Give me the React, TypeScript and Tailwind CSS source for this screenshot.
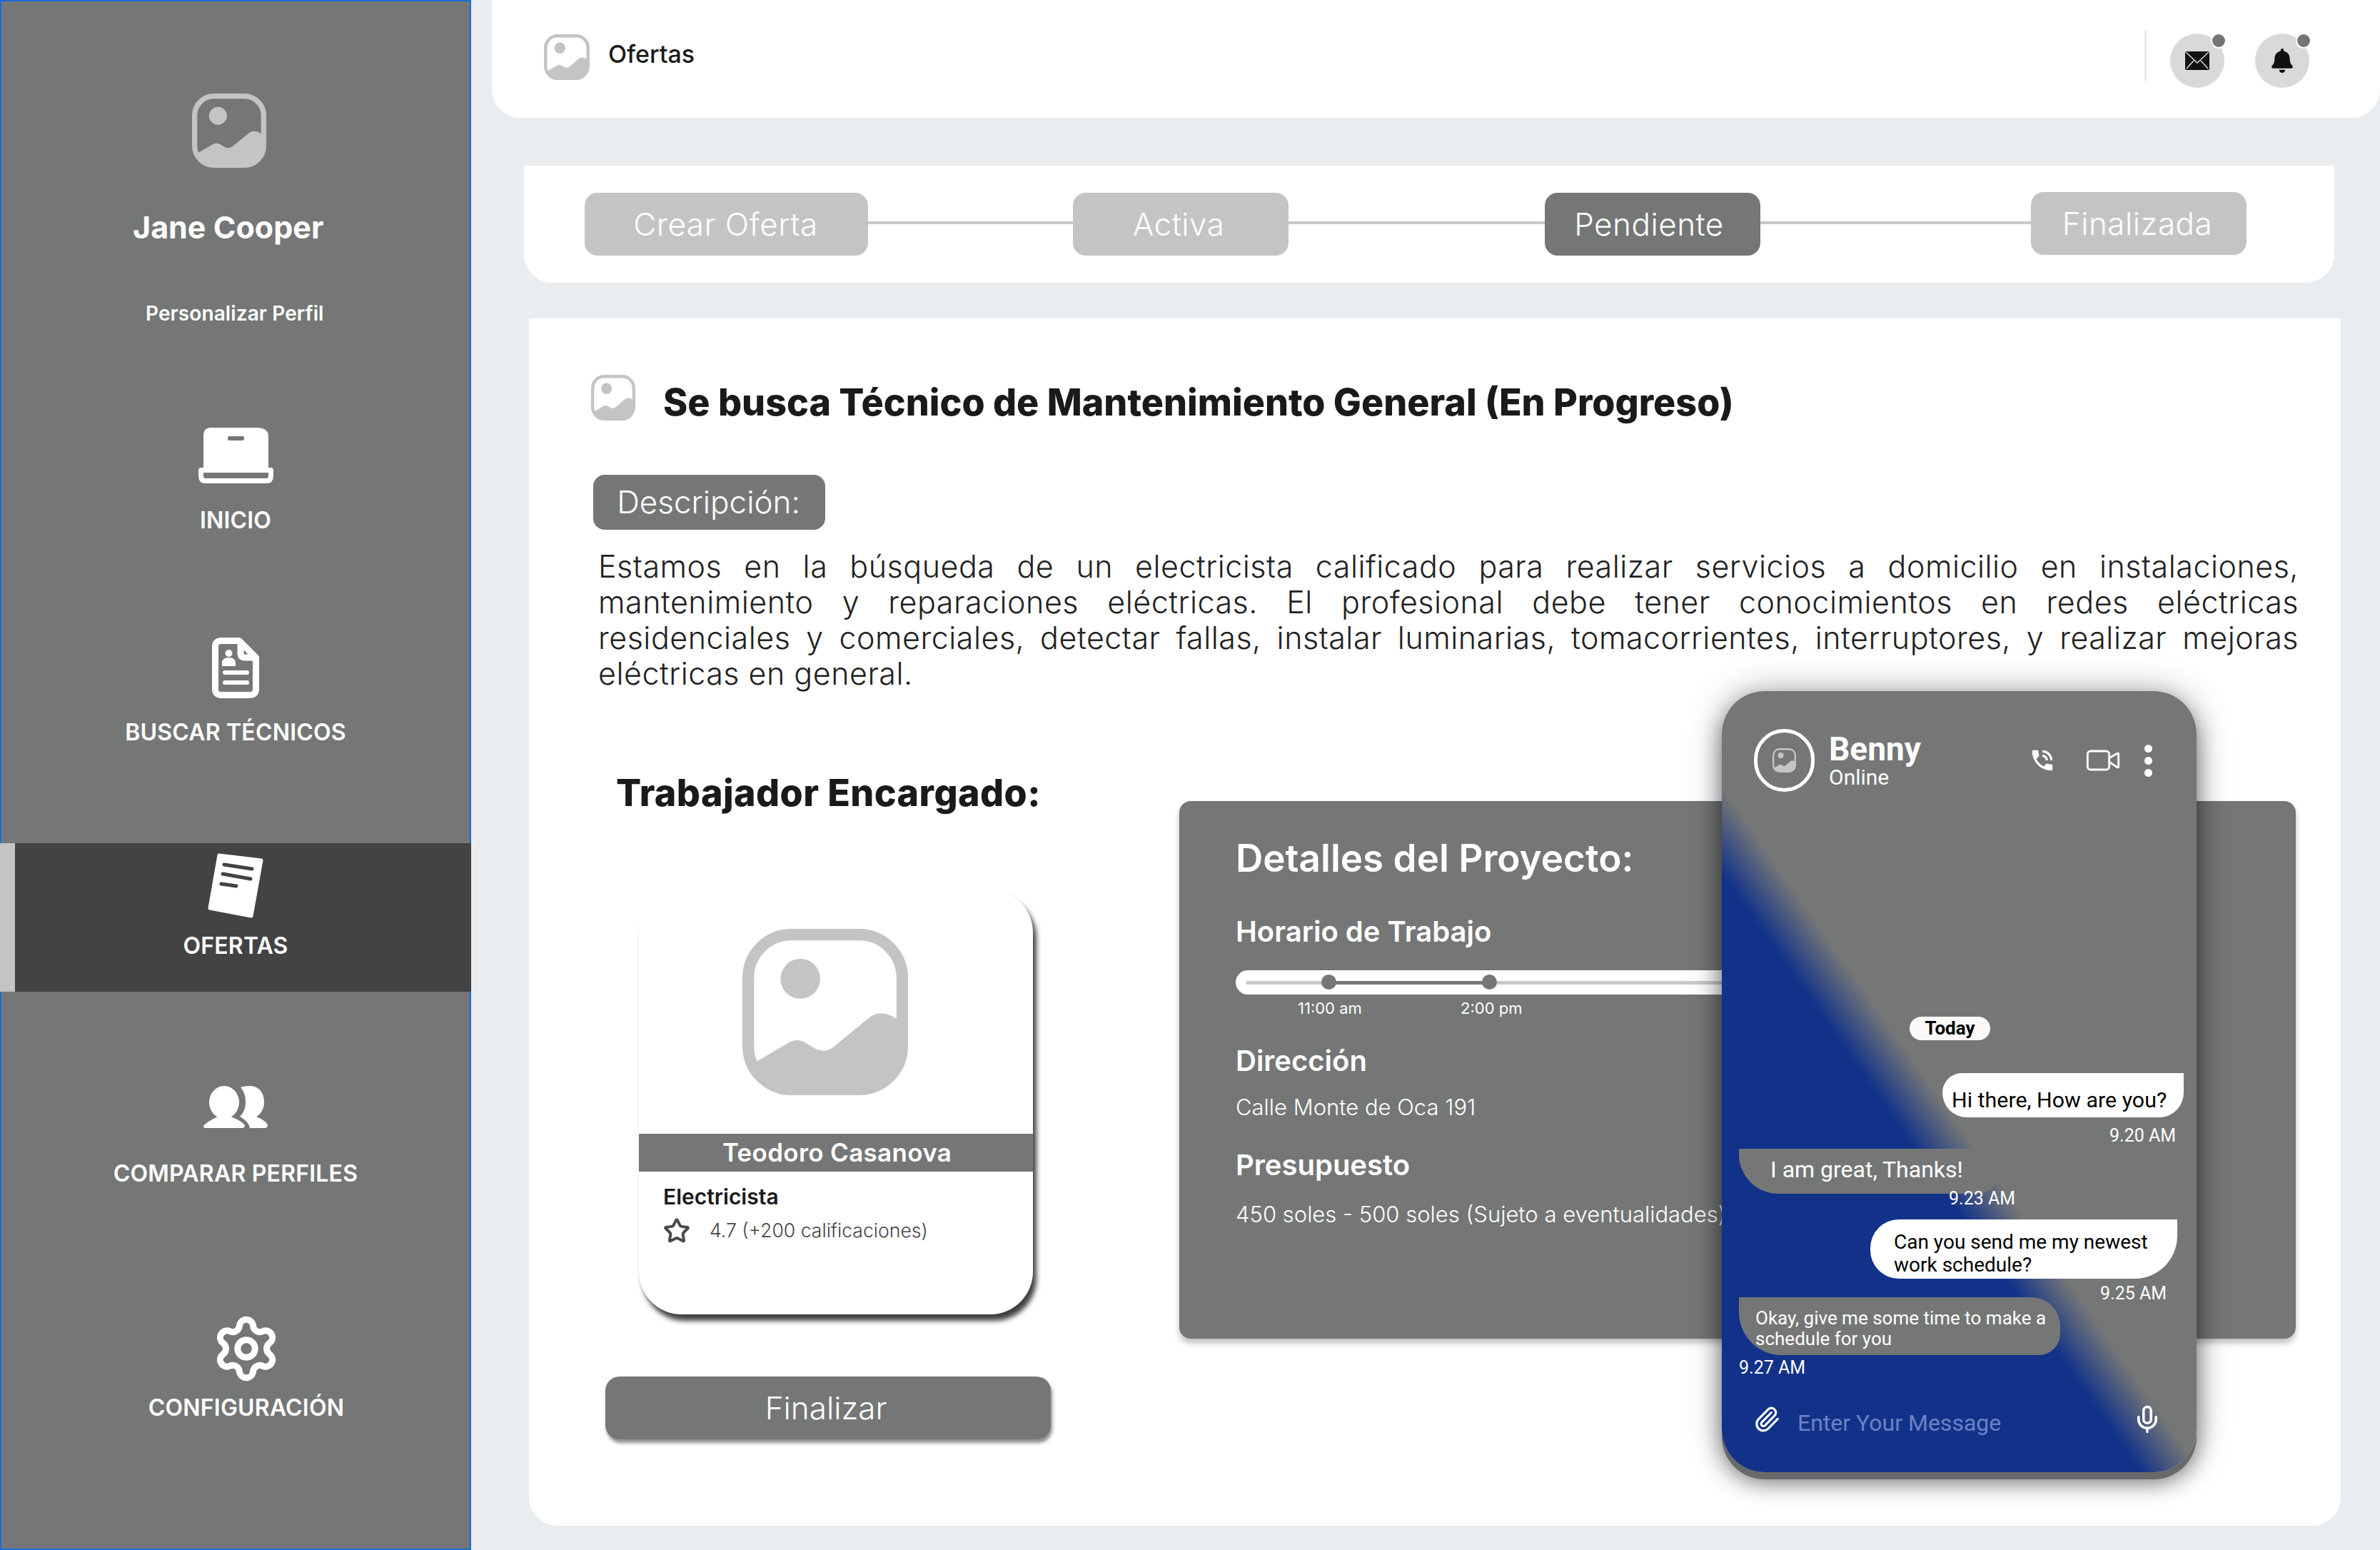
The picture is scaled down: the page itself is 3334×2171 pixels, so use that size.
import { Mic, Paperclip, Settings, Star, Video } from "lucide-react"
import { FaBell } from "react-icons/fa"
import { MdPhoneInTalk } from "react-icons/md"

function ImageIcon({ className }: { className?: string }) {
  return (
    <svg viewBox="0 0 100 100" preserveAspectRatio="none" className={className} fill="currentColor">
      <rect x="3.5" y="3.5" width="93" height="93" rx="26" fill="none" stroke="currentColor" strokeWidth="7" />
      <circle cx="35" cy="30" r="12" />
      <path d="M8 80 L27 69 Q33 65 39 69 L44 72 Q50 75 55 71 L77 53 Q84 48 93 54 L97 55 V72 Q97 97 72 97 H28 Q3 97 3 72 V78 Z" />
    </svg>
  )
}

function LaptopIcon() {
  return (
    <svg viewBox="0 0 105 79" className="w-[105px] h-[79px]" fill="white">
      <path
        fillRule="evenodd"
        d="M17 0 H81 Q98 0 98 12 V56 H7 V12 Q7 0 17 0 Z M43 12 Q41 12 41 15 Q41 18 43 18 H62 Q64 18 64 15 Q64 12 62 12 Z"
      />
      <path
        fillRule="evenodd"
        d="M4 56 H101 Q105 56 105 60 V68 Q105 78 95 78 H10 Q0 78 0 68 V60 Q0 56 4 56 Z M7 63 V68 Q7 71 10 71 H95 Q98 71 98 68 V63 Z"
      />
    </svg>
  )
}

function ProfileDocIcon() {
  return (
    <svg viewBox="0 0 66 85" className="w-[66px] h-[85px]" fill="none" stroke="white">
      <path
        strokeWidth="9"
        strokeLinejoin="round"
        d="M13 4.5 H38 L61.5 28 V72 Q61.5 80.5 53 80.5 H13 Q4.5 80.5 4.5 72 V13 Q4.5 4.5 13 4.5 Z"
      />
      <path strokeWidth="9" strokeLinejoin="round" d="M40 6 V22 Q40 28 46 28 H60" />
      <circle cx="23.5" cy="22" r="5" fill="white" stroke="none" />
      <path d="M14 40 V36 Q14 28 23.5 28 Q33 28 33 36 V40 Z" fill="white" stroke="none" />
      <path strokeWidth="6" strokeLinecap="round" d="M18 49 H49 M18 63 H49" />
    </svg>
  )
}

function OfferIcon() {
  return (
    <svg viewBox="0 0 78 92" className="w-[78px] h-[92px]">
      <path d="M16 4 L75 11 L61 89 L3 78 Z" fill="white" stroke="white" strokeWidth="5" strokeLinejoin="round" />
      <path d="M23 17 L62 23 M21 30 L60 37 M19 44 L40 47" stroke="#434343" strokeWidth="5" strokeLinecap="round" />
    </svg>
  )
}

function PeopleIcon() {
  return (
    <svg viewBox="0 0 90 59" className="w-[90px] h-[59px]" fill="white">
      <ellipse cx="29" cy="23" rx="21" ry="23" />
      <path d="M0 56 Q5 50 20 43 H38 Q54 49 58 55 Q58 59 54 59 H3 Q0 59 0 56 Z" />
      <path d="M52 2 Q57 0 65 0 C78 0 85 10 85 23 C85 32 80 40 74 43 Q86 48 90 54 Q90 59 86 59 H65 C64 52 58 47 51 43 C56 38 59 31 59 23 C59 14 57 8 52 2 Z" />
    </svg>
  )
}

function MailIcon() {
  return (
    <svg viewBox="0 0 34 26" className="w-[34px] h-[26px]">
      <rect width="34" height="26" rx="2" fill="#111111" />
      <path d="M1 1 L17 16 L33 1 M2 24 L12 13 M32 24 L22 13" fill="none" stroke="#d9d9d9" strokeWidth="1.5" />
    </svg>
  )
}

function Sidebar() {
  const labelClass = "h-[40px] text-[32px] leading-[40px] font-semibold tracking-[0.2px] whitespace-nowrap"
  return (
    <aside className="w-[660px] h-[2171px] shrink-0 border-2 border-[#1a6bdc] bg-[#757776] flex flex-col text-white">
      <ImageIcon className="ml-[267px] mt-[129px] w-[104px] h-[104px] text-[#c4c4c4]" />
      <div className="mt-[55px] ml-[184px] h-[56px] text-[43px] leading-[56px] font-bold whitespace-nowrap">Jane Cooper</div>
      <div className="mt-[73px] ml-[202px] h-[40px] text-[28px] leading-[40px] font-semibold tracking-[0.1px] whitespace-nowrap">Personalizar Perfil</div>

      <div className="mt-[140px] flex flex-col items-center">
        <LaptopIcon />
        <div className={`mt-[31px] ${labelClass}`}>INICIO</div>
      </div>
      <div className="mt-[144px] flex flex-col items-center">
        <ProfileDocIcon />
        <div className={`mt-[28px] ${labelClass}`}>BUSCAR TÉCNICOS</div>
      </div>
      <div className="mt-[135px] -mx-[2px] h-[208px] pt-[13px] flex flex-col items-center bg-[#434343] border-l-[21px] border-[#c4c4c4] pr-[21px]">
        <OfferIcon />
        <div className={`mt-[19px] ${labelClass}`}>OFERTAS</div>
      </div>
      <div className="mt-[132px] flex flex-col items-center">
        <PeopleIcon />
        <div className={`mt-[44px] ${labelClass}`}>COMPARAR PERFILES</div>
      </div>
      <div className="mt-[181px] pl-[30px] flex flex-col items-center">
        <Settings size={98} strokeWidth={2.2} className="-my-[5px]" />
        <div className={`mt-[19px] ${labelClass}`}>CONFIGURACIÓN</div>
      </div>
    </aside>
  )
}

function TopBar() {
  return (
    <header className="ml-[29px] h-[165px] bg-white rounded-bl-[40px] rounded-br-[40px] flex items-center pl-[73px] pr-[99px]">
      <ImageIcon className="w-[64px] h-[64px] -mt-[6px] text-[#c4c4c4]" />
      <span className="ml-[26px] -mt-[15px] text-[34px] font-medium text-[#1a1a1a]">Ofertas</span>
      <div className="ml-auto w-[3px] h-[70px] -mt-[9px] bg-[#e6e8ea]" />
      <div className="ml-[33px] mt-[5px] relative w-[76px] h-[76px] rounded-full bg-[#d9d9d9] flex items-center justify-center">
        <MailIcon />
        <span className="absolute -top-[1px] -right-[3px] w-[22px] h-[22px] rounded-full bg-[#757776] border-2 border-white" />
      </div>
      <div className="ml-[43px] mt-[5px] relative w-[76px] h-[76px] rounded-full bg-[#d9d9d9] flex items-center justify-center">
        <FaBell className="text-[#111111] text-[34px]" />
        <span className="absolute -top-[1px] -right-[3px] w-[22px] h-[22px] rounded-full bg-[#757776] border-2 border-white" />
      </div>
    </header>
  )
}

function Stepper() {
  const pillClass = "h-[88px] rounded-[18px] flex items-center justify-center text-[44px] font-light tracking-[0.5px] text-white"
  const lineClass = "h-[4px] bg-[#c9c9c9] -mt-[4px]"
  return (
    <section className="ml-[74px] mt-[67px] w-[2536px] h-[164px] bg-white rounded-bl-[40px] rounded-br-[40px] flex items-center pl-[85px]">
      <div className={`w-[397px] pr-[2px] bg-[#c4c4c4] ${pillClass}`}>Crear Oferta</div>
      <div className={`w-[287px] ${lineClass}`} />
      <div className={`w-[302px] pr-[6px] bg-[#c4c4c4] ${pillClass}`}>Activa</div>
      <div className={`w-[359px] ${lineClass}`} />
      <div className={`w-[302px] pr-[10px] bg-[#757776] ${pillClass}`}>Pendiente</div>
      <div className={`w-[379px] ${lineClass}`} />
      <div className={`w-[302px] pr-[4px] -mt-[3px] bg-[#c4c4c4] ${pillClass}`}>Finalizada</div>
    </section>
  )
}

function WorkerColumn() {
  return (
    <div className="ml-[107px] w-[624px] shrink-0 flex flex-col">
      <h2 className="ml-[15px] h-[60px] text-[52px] leading-[60px] font-extrabold tracking-[0.4px] text-[#1a1a1a] whitespace-nowrap">Trabajador Encargado:</h2>
      <div className="mt-[105px] ml-[47px] w-[552px] h-[595px] bg-white rounded-[60px] shadow-[5px_9px_7px_rgba(0,0,0,0.75)] overflow-hidden flex flex-col">
        <ImageIcon className="mt-[55px] ml-[145px] w-[232px] h-[233px] text-[#c4c4c4]" />
        <div className="mt-[54px] h-[53px] pl-[3px] bg-[#757776] flex items-center justify-center text-[35px] font-semibold tracking-[0.3px] text-white">Teodoro Casanova</div>
        <div className="mt-[15px] ml-[34px] text-[30px] leading-[40px] font-semibold text-[#1a1a1a]">Electricista</div>
        <div className="mt-[8px] ml-[34px] flex items-center text-[26.6px] font-light text-[#444444]">
          <Star size={38} strokeWidth={2.5} className="text-[#4a4a4a]" />
          <span className="ml-[27px]">4.7 (+200 calificaciones)</span>
        </div>
      </div>
      <button className="mt-[87px] h-[88px] pr-[6px] rounded-[20px] bg-[#757776] shadow-[2px_5px_5px_rgba(0,0,0,0.45)] text-[44px] font-light text-white">
        Finalizar
      </button>
    </div>
  )
}

function DetailsPanel() {
  const headingClass = "h-[46px] text-[40px] leading-[46px] font-semibold text-white"
  const valueClass = "h-[40px] text-[31px] leading-[40px] font-light text-white whitespace-nowrap"
  return (
    <div className="ml-[180px] mt-[152px] w-[1564px] h-[753px] rounded-[16px] bg-[#757776] shadow-[0_6px_8px_rgba(0,0,0,0.25)] pt-[50px] pl-[79px] flex flex-col">
      <h3 className="h-[60px] text-[53px] leading-[60px] font-semibold text-white">Detalles del Proyecto:</h3>
      <div className={`mt-[50px] ${headingClass}`}>Horario de Trabajo</div>
      <div className="mt-[31px] relative w-[800px] h-[34px] rounded-l-full bg-white">
        <div className="absolute left-[15px] right-0 top-[15px] h-[5px] bg-[#c9c9c9]" />
        <div className="absolute left-[130px] w-[225px] top-[15px] h-[5px] bg-[#757776]" />
        <span className="absolute left-[120px] top-[6px] w-[21px] h-[21px] rounded-full bg-[#757776]" />
        <span className="absolute left-[345px] top-[6px] w-[21px] h-[21px] rounded-full bg-[#757776]" />
      </div>
      <div className="mt-[4px] pl-[87px] flex text-[22px] leading-[30px] text-white">
        <span className="w-[228px]">11:00 am</span>
        <span>2:00 pm</span>
      </div>
      <div className={`mt-[36px] ${headingClass}`}>Dirección</div>
      <div className={`mt-[22px] ${valueClass}`}>Calle Monte de Oca 191</div>
      <div className={`mt-[38px] ${headingClass}`}>Presupuesto</div>
      <div className={`mt-[26px] ${valueClass}`}>450 soles - 500 soles (Sujeto a eventualidades)</div>
    </div>
  )
}

function ChatPhone() {
  const stamp = "text-[25px] leading-[32px] text-white"
  return (
    <div
      className="absolute left-[1671px] top-[522px] w-[665px] h-[1094px] rounded-[60px] bg-[linear-gradient(235deg,#757776_53%,#12328a_59%)] shadow-[0_10px_0_#686a69,0_14px_30px_rgba(0,0,0,0.45),0_0_50px_rgba(0,0,0,0.3)] flex flex-col"
      style={{ fontFamily: "Roboto, sans-serif" }}
    >
      <div className="mt-[53px] ml-[45px] mr-[62px] flex items-center text-white">
        <div className="w-[85px] h-[88px] rounded-full border-[5px] border-white flex items-center justify-center">
          <ImageIcon className="w-[33px] h-[34px] text-[#c4c4c4]" />
        </div>
        <div className="ml-[20px] pt-[2px] flex flex-col">
          <span className="text-[46px] leading-[46px] font-bold">Benny</span>
          <span className="text-[30px] leading-[34px]">Online</span>
        </div>
        <MdPhoneInTalk className="ml-auto text-[38px]" />
        <Video size={52} strokeWidth={1.3} className="ml-[40px]" />
        <div className="ml-[32px] flex flex-col gap-[6px]">
          <span className="w-[11px] h-[11px] rounded-full bg-white" />
          <span className="w-[11px] h-[11px] rounded-full bg-white" />
          <span className="w-[11px] h-[11px] rounded-full bg-white" />
        </div>
      </div>

      <div className="mt-[315px] ml-[263px] w-[113px] h-[33px] rounded-full bg-[#faf9f7] flex items-center justify-center text-[26px] font-bold text-black">
        Today
      </div>

      <div className="mt-[46px] ml-[309px] w-[338px] h-[62px] bg-white rounded-[40px_0_50px_50px] pl-[13px] pt-[20px] text-[30.4px] leading-[36px] text-black whitespace-nowrap">
        Hi there, How are you?
      </div>
      <div className={`mt-[10px] ml-[543px] ${stamp}`}>9.20 AM</div>

      <div className="mt-[2px] ml-[24px] w-[364px] h-[63px] bg-[#757776] rounded-[0_0_30px_55px] pl-[44px] pt-[7px] text-[32px] leading-[44px] text-white whitespace-nowrap">
        I am great, Thanks!
      </div>
      <div className={`-mt-[9px] ml-[318px] ${stamp}`}>9.23 AM</div>

      <div className="mt-[13px] ml-[208px] w-[430px] h-[83px] bg-white rounded-[40px_0_60px_40px] pl-[33px] pt-[16px] text-[28px] leading-[32px] text-black">
        Can you send me my newest
        <br />
        work schedule?
      </div>
      <div className={`mt-[5px] ml-[530px] ${stamp}`}>9.25 AM</div>

      <div className="-mt-[11px] ml-[24px] w-[450px] h-[81px] bg-[#757776] rounded-[0_40px_30px_60px] pl-[23px] pt-[15px] text-[26px] leading-[29px] text-white">
        Okay, give me some time to make a
        <br />
        schedule for you
      </div>
      <div className={`mt-[2px] ml-[24px] ${stamp}`}>9.27 AM</div>

      <div className="mt-[27px] ml-[44px] mr-[48px] flex items-center text-white">
        <Paperclip size={38} strokeWidth={2} />
        <span className="ml-[24px] mt-[10px] text-[32px] text-[#6c82c4]">Enter Your Message</span>
        <Mic size={42} strokeWidth={2} className="ml-auto" />
      </div>
    </div>
  )
}

const descriptionLines = [
  "Estamos en la búsqueda de un electricista calificado para realizar servicios a domicilio en instalaciones,",
  "mantenimiento y reparaciones eléctricas. El profesional debe tener conocimientos en redes eléctricas",
  "residenciales y comerciales, detectar fallas, instalar luminarias, tomacorrientes, interruptores, y realizar mejoras",
]

function MainCard() {
  return (
    <main className="relative ml-[81px] mt-[50px] w-[2538px] h-[1691px] bg-white rounded-bl-[40px] rounded-br-[40px] flex flex-col">
      <div className="mt-[79px] ml-[87px] flex items-start">
        <ImageIcon className="w-[62px] h-[64px] text-[#c4c4c4]" />
        <h1 className="ml-[39px] mt-[4px] text-[52px] leading-[70px] font-extrabold text-[#1a1a1a] whitespace-nowrap">
          Se busca Técnico de Mantenimiento General (En Progreso)
        </h1>
      </div>
      <div className="mt-[66px] ml-[90px] w-[325px] h-[77px] pb-[2px] pr-[2px] rounded-[16px] bg-[#757776] flex items-center justify-center text-[44px] font-light text-white">
        Descripción:
      </div>
      <div className="mt-[26px] ml-[97px] w-[2382px] h-[202px] text-[43px] leading-[50px] font-light tracking-[0.5px] text-[#222222]">
        {descriptionLines.map((line) => (
          <p key={line} className="[text-align-last:justify]">
            {line}
          </p>
        ))}
        <p>eléctricas en general.</p>
      </div>
      <div className="flex items-start">
        <div className="mt-[111px]">
          <WorkerColumn />
        </div>
        <DetailsPanel />
      </div>
      <ChatPhone />
    </main>
  )
}

export default function App() {
  return (
    <div className="w-[3334px] h-[2171px] overflow-hidden flex bg-[#e9edf0]" style={{ fontFamily: "Inter, sans-serif" }}>
      <Sidebar />
      <div className="flex-1 flex flex-col">
        <TopBar />
        <Stepper />
        <MainCard />
      </div>
    </div>
  )
}
